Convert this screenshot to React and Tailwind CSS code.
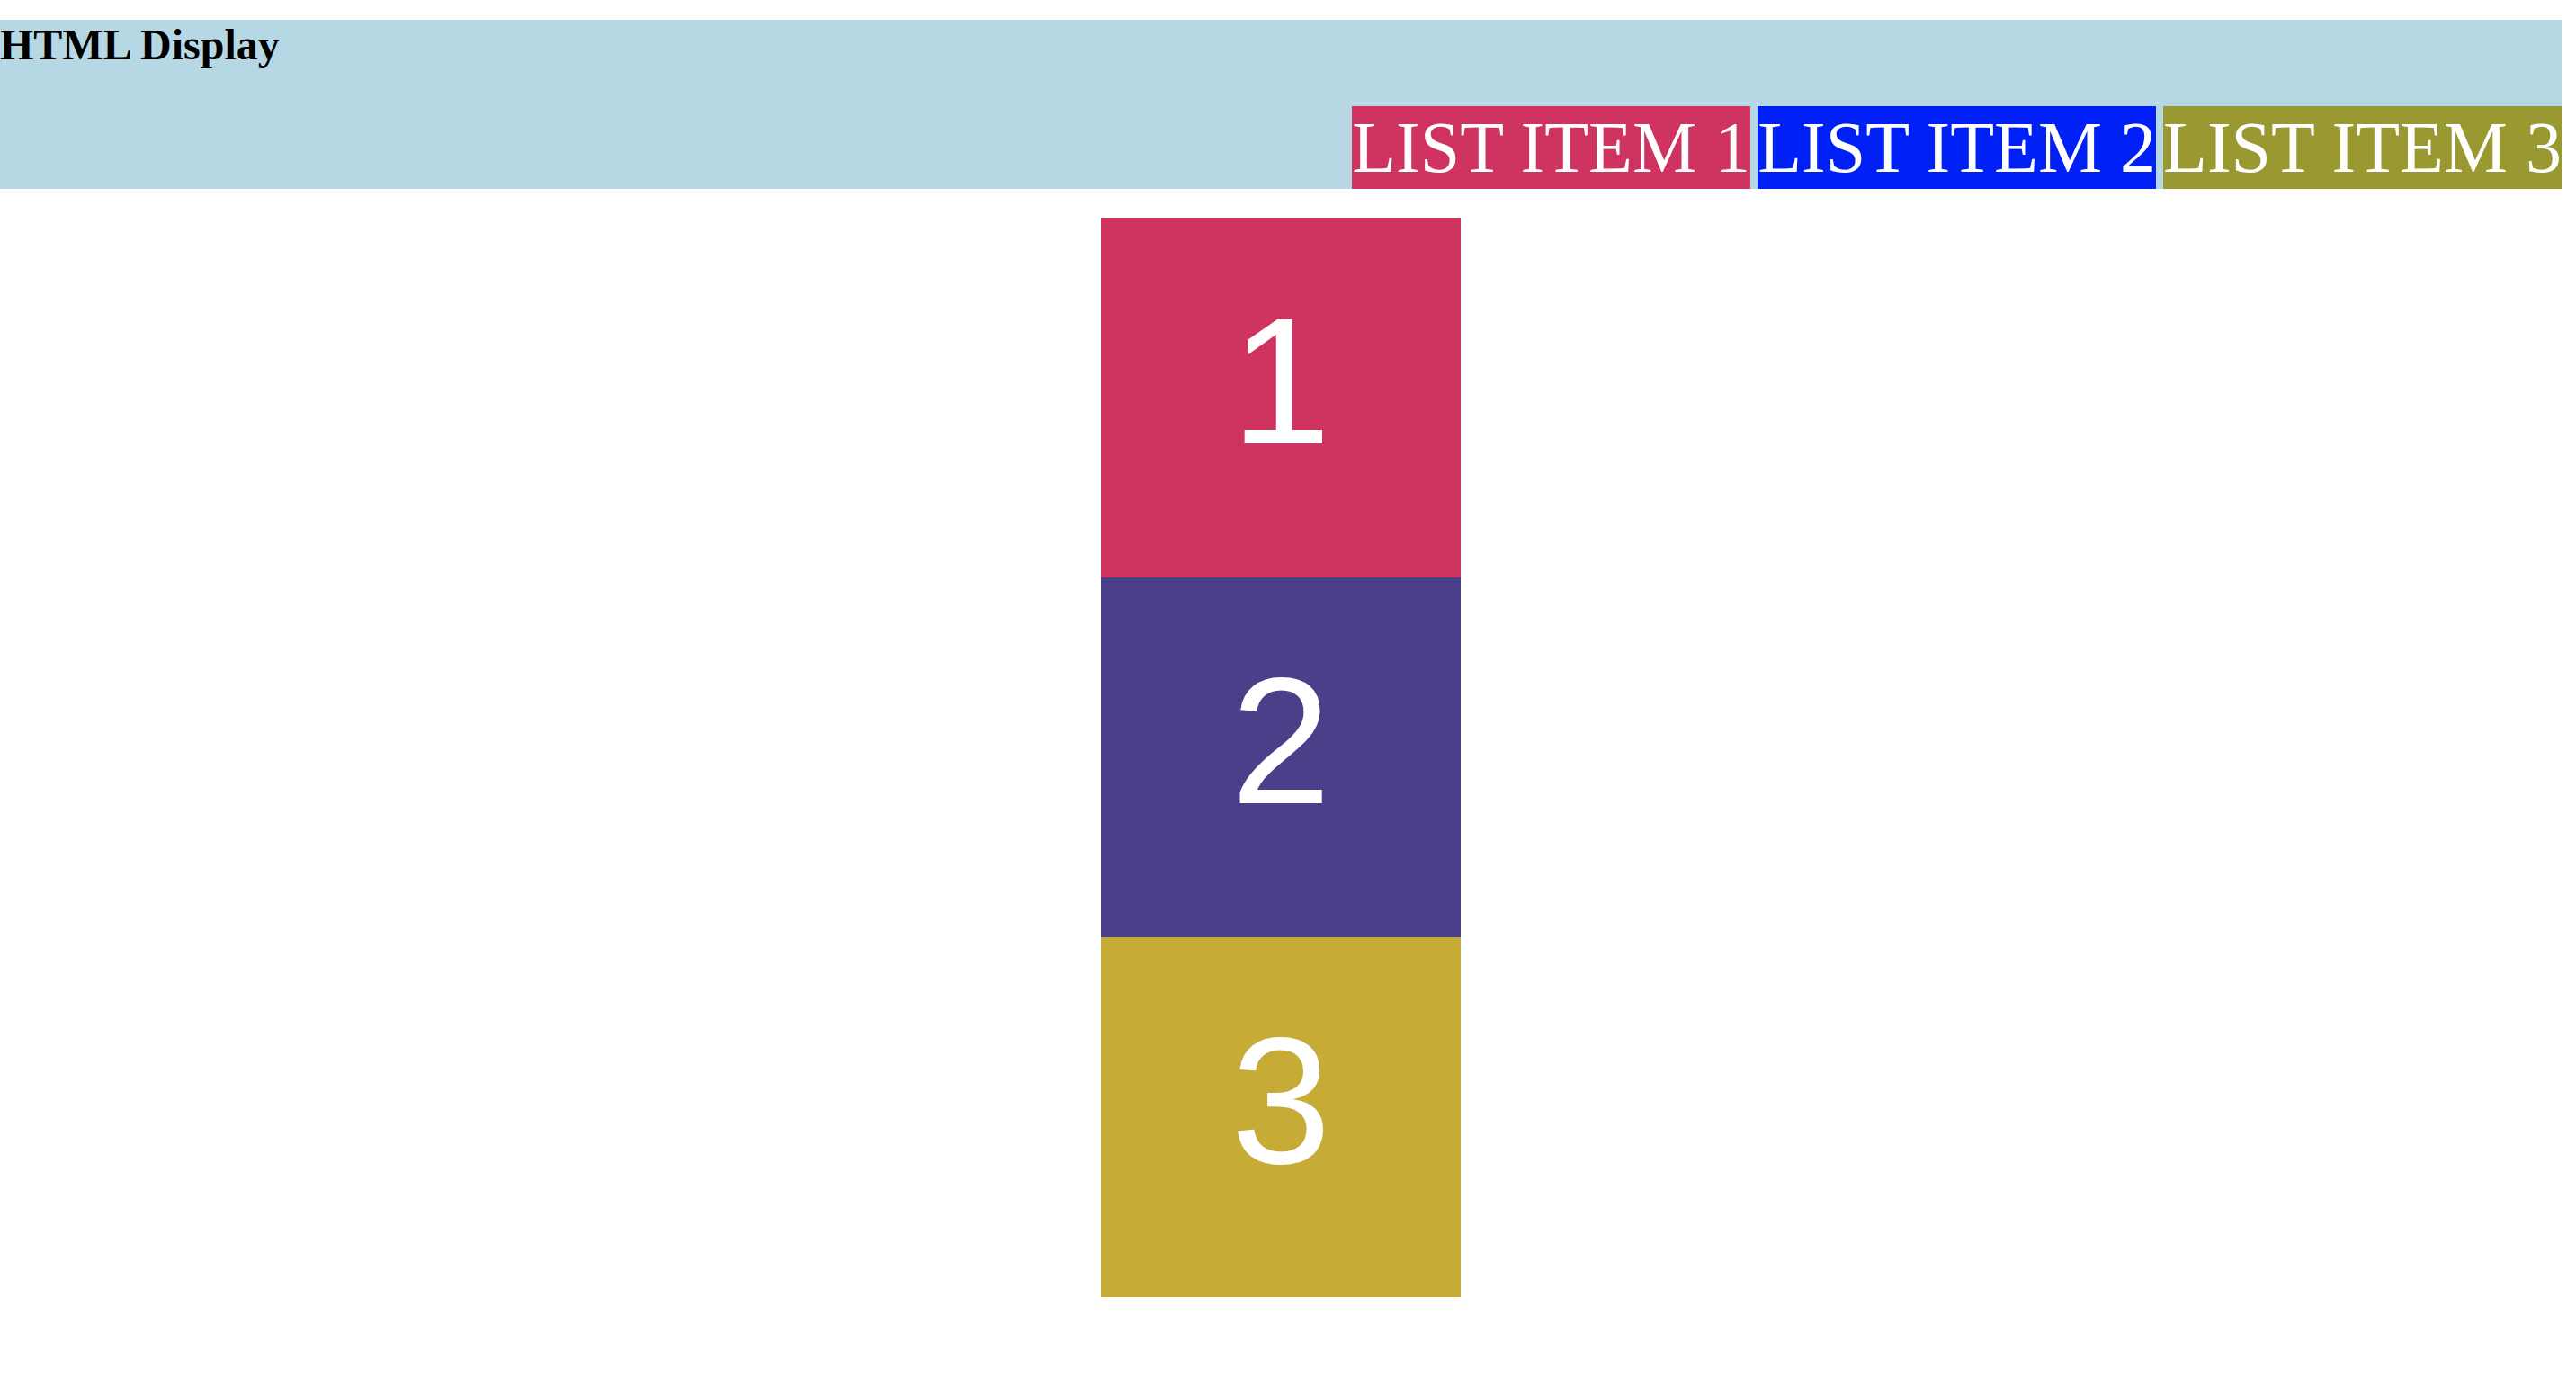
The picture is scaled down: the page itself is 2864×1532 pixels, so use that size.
const items = [
  { label: "LIST ITEM 1", bg: "bg-[#cf3360]" },
  { label: "LIST ITEM 2", bg: "bg-[#0020f5]" },
  { label: "LIST ITEM 3", bg: "bg-[#9a9830]" },
];

const boxes = [
  { n: "1", bg: "bg-[#cf3360]" },
  { n: "2", bg: "bg-[#4a3f88]" },
  { n: "3", bg: "bg-[#c7ab37]" },
];

export default function App() {
  return (
    <main className="min-h-screen bg-white pt-[22px] font-['Liberation_Serif',serif]">
      <header className="flex w-[2848px] flex-col bg-[#b6d8e4]">
        <h1 className="h-[96px] text-[48px] font-bold leading-[55px] text-black">HTML Display</h1>
        <ul className="flex justify-end gap-2">
          {items.map((item) => (
            <li key={item.label} className={`${item.bg} h-[92px] whitespace-nowrap text-[80px] leading-[92px] text-white`}>
              {item.label}
            </li>
          ))}
        </ul>
      </header>
      <section className="mt-8 flex w-[2848px] flex-col items-center">
        {boxes.map((box) => (
          <div key={box.n} className={`${box.bg} h-[400px] w-[400px] pt-[67px] text-center font-['Liberation_Sans',Arial,sans-serif] text-[200px] leading-[230px] text-white`}>
            {box.n}
          </div>
        ))}
      </section>
    </main>
  );
}
